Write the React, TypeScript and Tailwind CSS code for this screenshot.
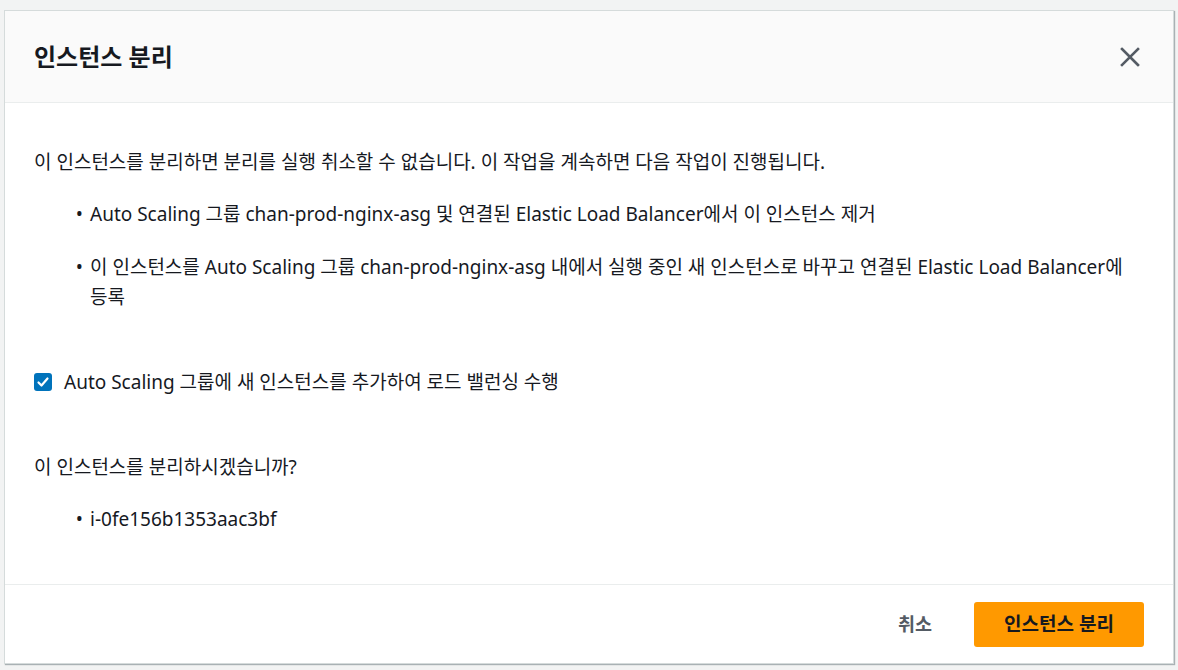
const font = {
  fontFamily: '"Noto Sans", "Noto Sans CJK KR", sans-serif',
};

function CloseIcon() {
  return (
    <svg width="20" height="20" viewBox="0 0 20 20" fill="none">
      <path
        d="M2 2L18 18M18 2L2 18"
        stroke="#545b64"
        strokeWidth="2.6"
        strokeLinecap="square"
      />
    </svg>
  );
}

function Bullet(props: { children: React.ReactNode }) {
  return (
    <li className="flex">
      <span className="w-[56px] shrink-0 text-right pr-[7px]">•</span>
      <span>{props.children}</span>
    </li>
  );
}

export default function App() {
  return (
    <div
      className="w-[1178px] h-[670px] bg-[#f2f3f3] pt-[10px] pl-[4px] overflow-hidden"
      style={font}
    >
      <div className="w-[1170px] h-[654px] bg-white border border-[#d5dbdb] shadow-[1px_1px_1px_0_rgba(0,28,36,0.3)] flex flex-col text-[#16191f]">
        <div className="h-[92px] shrink-0 bg-[#fafafa] border-b border-[#eaeded] flex items-center justify-between pl-[29px] pr-[30px]">
          <h1 className="text-[24px] font-bold">인스턴스 분리</h1>
          <button className="w-[20px] h-[20px] flex items-center justify-center mr-[3px]">
            <CloseIcon />
          </button>
        </div>

        <div className="flex-1 pl-[29px] pr-[30px] pt-[44px] text-[19px] leading-[30px]">
          <p>이 인스턴스를 분리하면 분리를 실행 취소할 수 없습니다. 이 작업을 계속하면 다음 작업이 진행됩니다.</p>
          <ul className="mt-[22px] flex flex-col gap-[23px]">
            <Bullet>Auto Scaling 그룹 chan-prod-nginx-asg 및 연결된 Elastic Load Balancer에서 이 인스턴스 제거</Bullet>
            <Bullet>
              이 인스턴스를 Auto Scaling 그룹 chan-prod-nginx-asg 내에서 실행 중인 새 인스턴스로 바꾸고 연결된 Elastic Load Balancer에 등록
            </Bullet>
          </ul>

          <label className="mt-[55px] flex items-center gap-[12px]">
            <span className="w-[18px] h-[18px] rounded-[3px] bg-[#0073bb] flex items-center justify-center">
              <svg width="14" height="14" viewBox="0 0 14 14" fill="none">
                <path
                  d="M2.5 7.5L5.5 10.5L11.5 3.5"
                  stroke="white"
                  strokeWidth="2.2"
                  strokeLinecap="round"
                  strokeLinejoin="round"
                />
              </svg>
            </span>
            <span>Auto Scaling 그룹에 새 인스턴스를 추가하여 로드 밸런싱 수행</span>
          </label>

          <p className="mt-[55px]">이 인스턴스를 분리하시겠습니까?</p>
          <ul className="mt-[22px]">
            <Bullet>i-0fe156b1353aac3bf</Bullet>
          </ul>
        </div>

        <div className="h-[79px] shrink-0 border-t border-[#eaeded] flex items-center justify-end gap-[22px] pr-[29px]">
          <button className="px-[20px] h-[45px] text-[18.5px] font-bold text-[#545b64]">취소</button>
          <button className="w-[170px] h-[45px] rounded-[3px] bg-[#ff9900] text-[19px] font-bold text-[#16191f]">
            인스턴스 분리
          </button>
        </div>
      </div>
    </div>
  );
}
